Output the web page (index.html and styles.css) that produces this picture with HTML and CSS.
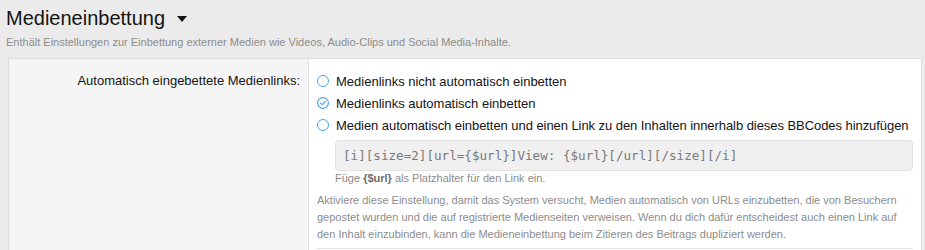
FILE: index.html
```html
<!DOCTYPE html>
<html lang="de">

<head>
    <meta charset="UTF-8">
    <meta name="viewport" content="width=device-width, initial-scale=1.0">
    <title>Medieneinbettung</title>
    <link rel="stylesheet" href="styles.css">
</head>

<body>
    <div class="page-head">
        <h1 class="title">Medieneinbettung <span class="caret"></span></h1>
        <p class="desc">Enthält Einstellungen zur Einbettung externer Medien wie Videos, Audio-Clips und Social Media-Inhalte.</p>
    </div>

    <div class="block">
        <dl class="form-row">
            <dt>Automatisch eingebettete Medienlinks:</dt>
            <dd>
                <ul class="choices">
                    <li><span class="radio"></span>Medienlinks nicht automatisch einbetten</li>
                    <li>
                        <span class="radio checked">
                            <svg width="12" height="12" viewBox="0 0 12 12">
                                <circle cx="6" cy="6" r="5.4" fill="none" stroke="#47a7eb" stroke-width="1.2" />
                                <path d="M3.6 6.1 L5.3 7.7 L8.4 4.4" fill="none" stroke="#47a7eb" stroke-width="1.2" stroke-linecap="round" stroke-linejoin="round" />
                            </svg>
                        </span>Medienlinks automatisch einbetten
                    </li>
                    <li class="long"><span class="radio"></span>Medien automatisch einbetten und einen Link zu den Inhalten innerhalb dieses BBCodes hinzufügen</li>
                </ul>
                <div class="dependent">
                    <div class="code">[i][size=2][url={$url}]View: {$url}[/url][/size][/i]</div>
                    <p class="hint">Füge <b>{$url}</b> als Platzhalter für den Link ein.</p>
                </div>
                <p class="explain">Aktiviere diese Einstellung, damit das System versucht, Medien automatisch von URLs einzubetten, die von Besuchern gepostet wurden und die auf registrierte Medienseiten verweisen. Wenn du dich dafür entscheidest auch einen Link auf den Inhalt einzubinden, kann die Medieneinbettung beim Zitieren des Beitrags dupliziert werden.</p>
            </dd>
        </dl>
        <dl class="form-row">
            <dt></dt>
            <dd>
                <div class="sep"></div>
            </dd>
        </dl>
    </div>
</body>

</html>
```

FILE: styles.css
```css
* {
    margin: 0;
    padding: 0;
    box-sizing: border-box;
}

body {
    background-color: #ebebeb;
    font-family: "Liberation Sans", Arial, sans-serif;
    color: #141414;
}

.page-head {
    padding: 6px 6px 0 6px;
}

.title {
    font-size: 20px;
    font-weight: 400;
    line-height: 24px;
    display: flex;
    align-items: center;
    gap: 12px;
}

.caret {
    width: 0;
    height: 0;
    border-left: 5px solid transparent;
    border-right: 5px solid transparent;
    border-top: 6px solid #141414;
    margin-top: 1px;
}

.desc {
    font-size: 11px;
    color: #8c8c8c;
    margin-top: 5px;
    line-height: 15px;
}

.block {
    margin: 8px 3px 0 8px;
    border: 1px solid #dedede;
    border-bottom: 0;
    background-color: #fff;
}

.form-row {
    display: flex;
}

.form-row dt {
    width: 300px;
    flex-shrink: 0;
    background-color: #f5f5f5;
    border-right: 1px solid #e4e4e4;
    text-align: right;
    font-size: 13px;
    padding: 14px 8px 0 0;
    line-height: 16px;
}

.form-row dd {
    flex: 1;
    padding: 11px 8px 0 8px;
}

.choices {
    list-style: none;
    font-size: 13px;
}

.choices li {
    display: flex;
    align-items: center;
    height: 22px;
    white-space: nowrap;
}

.choices li.long {
    letter-spacing: -0.06px;
}

.radio {
    width: 12px;
    height: 12px;
    border: 1.2px solid #47a7eb;
    border-radius: 50%;
    margin-right: 7px;
    flex-shrink: 0;
}

.radio.checked {
    border: 0;
    display: flex;
}

.dependent {
    padding-left: 18px;
    margin-top: 4px;
}

.code {
    background-color: #f0f0f0;
    border: 1px solid #e2e2e2;
    border-radius: 4px;
    font-family: "DejaVu Sans Mono", "Liberation Mono", monospace;
    font-size: 12.6px;
    color: #7a7a7a;
    padding: 6px 7px;
    line-height: 17px;
}

.hint {
    font-size: 11px;
    color: #8c8c8c;
    margin-top: 1px;
    line-height: 12px;
}

.hint b {
    color: #6e6e6e;
}

.explain {
    font-size: 11px;
    color: #8c8c8c;
    line-height: 17px;
    margin-top: 8px;
    padding-bottom: 5px;
    padding-right: 4px;
}

.sep {
    border-top: 1px solid #e4e4e4;
    height: 20px;
}

.form-row + .form-row dd {
    padding-top: 0;
}
```
